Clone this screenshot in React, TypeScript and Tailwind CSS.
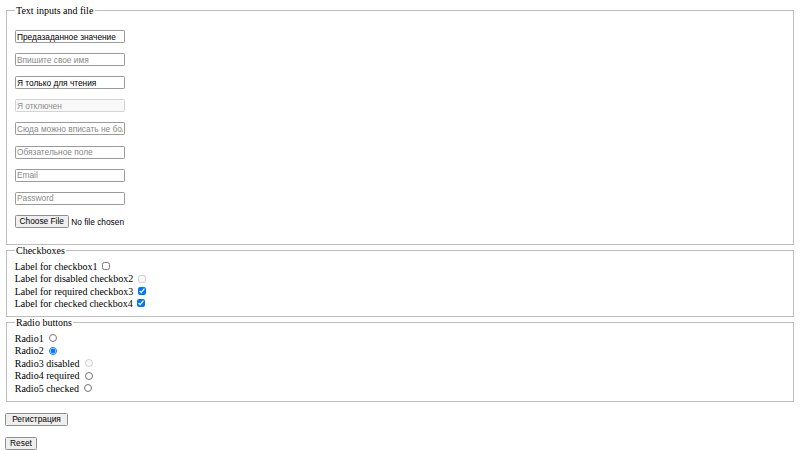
import React from 'react'

const inputCls =
  "w-[110px] h-[13px] px-[1.25px] border border-solid border-[#9a9a9a] rounded-[1.25px] bg-white text-[8.33px] leading-[10px] text-black font-['Liberation_Sans',Arial,sans-serif] placeholder:text-[#8a8a8a] outline-none"

const buttonCls =
  "h-[13px] px-[3.75px] border border-solid border-[#8f8f8f] rounded-[1.5px] bg-[#efefef] text-[8.33px] leading-[10px] text-black font-['Liberation_Sans',Arial,sans-serif]"

function Fieldset({ legend, children }: { legend: string; children: React.ReactNode }) {
  return (
    <fieldset className="mx-[1.25px] border border-solid border-[#bdbdbd] px-[7.5px] pt-[3.5px] pb-[6.25px]">
      <legend className="px-[1.25px] leading-[11.5px]">{legend}</legend>
      {children}
    </fieldset>
  )
}

const checkboxes = [
  { label: 'Label for checkbox1' },
  { label: 'Label for disabled checkbox2', disabled: true },
  { label: 'Label for required checkbox3', required: true, checked: true },
  { label: 'Label for checked checkbox4', checked: true },
]

const radios = [
  { label: 'Radio1' },
  { label: 'Radio2', checked: true },
  { label: 'Radio3 disabled', disabled: true },
  { label: 'Radio4 required', required: true },
  { label: 'Radio5 checked' },
]

export default function App() {
  return (
    <div className="w-[800px] h-[450px] overflow-hidden bg-white p-[5px] text-[10px] text-black font-['Liberation_Serif','Times_New_Roman',serif]">
      <form onSubmit={(e) => e.preventDefault()}>
        <Fieldset legend="Text inputs and file">
          <div className="flex flex-col gap-[10px] py-[10px]">
            <div className="h-[13.1px] flex items-center">
              <input className={inputCls} defaultValue="Предазаданное значение" />
            </div>
            <div className="h-[13.1px] flex items-center">
              <input className={inputCls} placeholder="Впишите свое имя" />
            </div>
            <div className="h-[13.1px] flex items-center">
              <input className={inputCls} defaultValue="Я только для чтения" readOnly />
            </div>
            <div className="h-[13.1px] flex items-center">
              <input
                className={inputCls + ' disabled:bg-[#f8f8f8] disabled:border-[#d4d4d4] disabled:placeholder:text-[#8f8f8f]'}
                placeholder="Я отключен"
                disabled
              />
            </div>
            <div className="h-[13.1px] flex items-center">
              <input className={inputCls} placeholder="Сюда можно вписать не более 10 символов" maxLength={10} />
            </div>
            <div className="h-[13.1px] flex items-center">
              <input className={inputCls} placeholder="Обязательное поле" required />
            </div>
            <div className="h-[13.1px] flex items-center">
              <input className={inputCls} type="email" placeholder="Email" />
            </div>
            <div className="h-[13.1px] flex items-center">
              <input className={inputCls} type="password" placeholder="Password" />
            </div>
            <div className="h-[13.1px] flex items-center">
              <input
                type="file"
                className="text-[8.33px] leading-[10px] text-black font-['Liberation_Sans',Arial,sans-serif] file:w-[54px] file:h-[13px] file:mr-[2.5px] file:px-[3.75px] file:border file:border-solid file:border-[#8f8f8f] file:rounded-[1.5px] file:bg-[#efefef] file:text-black"
              />
            </div>
          </div>
        </Fieldset>

        <Fieldset legend="Checkboxes">
          <div className="flex flex-col">
            {checkboxes.map((c) => (
              <label key={c.label} className="h-[12.4px] flex items-center whitespace-nowrap">
                {c.label}
                <input
                  type="checkbox"
                  className="ml-[4.5px] w-[8px] h-[8px]"
                  disabled={c.disabled}
                  required={c.required}
                  defaultChecked={c.checked}
                />
              </label>
            ))}
          </div>
        </Fieldset>

        <Fieldset legend="Radio buttons">
          <div className="flex flex-col">
            {radios.map((r) => (
              <label key={r.label} className="h-[12.5px] flex items-center whitespace-nowrap">
                {r.label}
                <input
                  type="radio"
                  name="radio"
                  className="ml-[5.5px] w-[8px] h-[8px]"
                  disabled={r.disabled}
                  required={r.required}
                  defaultChecked={r.checked}
                />
              </label>
            ))}
          </div>
        </Fieldset>

        <div className="flex flex-col items-start gap-[10px] pt-[10.5px]">
          <div className="h-[14px] flex items-center">
            <button type="submit" className={buttonCls + ' w-[63px]'}>Регистрация</button>
          </div>
          <div className="h-[14px] flex items-center">
            <button type="reset" className={buttonCls + ' w-[32px]'}>Reset</button>
          </div>
        </div>
      </form>
    </div>
  )
}
